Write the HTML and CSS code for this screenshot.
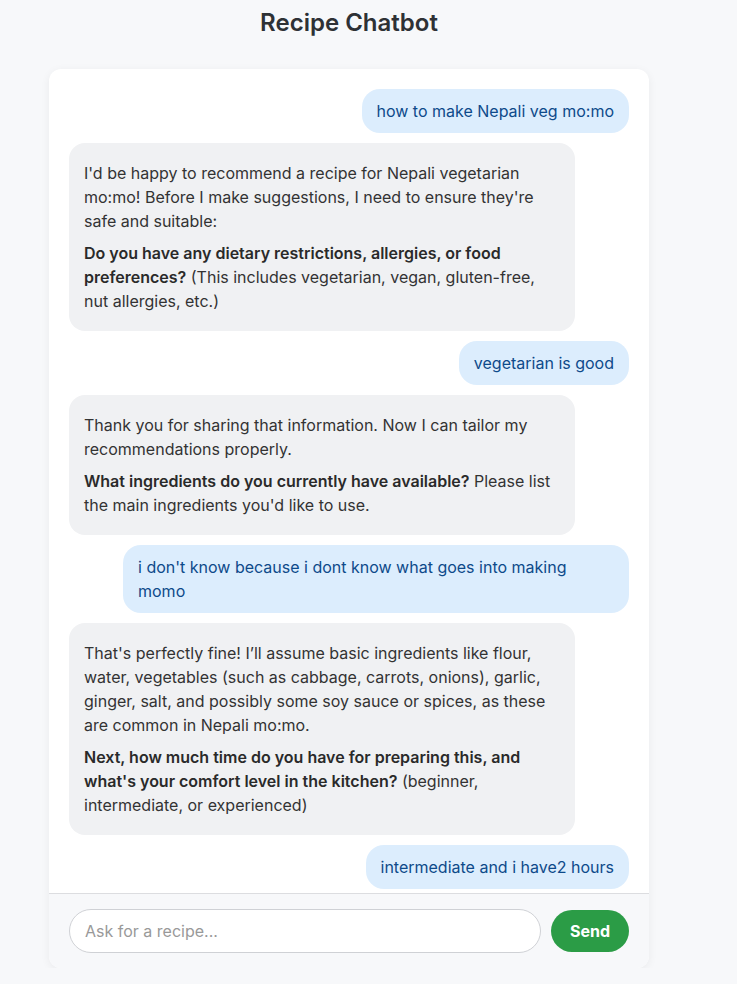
FILE: index.html
```html
<!DOCTYPE html>
<html lang="en">
<head>
<meta charset="utf-8">
<title>Recipe Chatbot</title>
<link rel="stylesheet" href="styles.css">
</head>
<body>
<div class="page">
  <h1 class="title">Recipe Chatbot</h1>
  <div class="chat">
    <div class="messages">
      <div class="msg user">how to make Nepali veg mo:mo</div>
      <div class="msg bot">
        <p>I'd be happy to recommend a recipe for Nepali vegetarian mo:mo! Before I make suggestions, I need to ensure they're safe and suitable:</p>
        <p><strong>Do you have any dietary restrictions, allergies, or food preferences?</strong> (This includes vegetarian, vegan, gluten-free, nut allergies, etc.)</p>
      </div>
      <div class="msg user">vegetarian is good</div>
      <div class="msg bot">
        <p>Thank you for sharing that information. Now I can tailor my recommendations properly.</p>
        <p><strong>What ingredients do you currently have available?</strong> Please list the main ingredients you'd like to use.</p>
      </div>
      <div class="msg user">i don't know because i dont know what goes into making momo</div>
      <div class="msg bot">
        <p>That's perfectly fine! I’ll assume basic ingredients like flour, water, vegetables (such as cabbage, carrots, onions), garlic, ginger, salt, and possibly some soy sauce or spices, as these are common in Nepali mo:mo.</p>
        <p><strong>Next, how much time do you have for preparing this, and what's your comfort level in the kitchen?</strong> (beginner, intermediate, or experienced)</p>
      </div>
      <div class="msg user">intermediate and i have2 hours</div>
    </div>
    <form class="composer">
      <input class="input" type="text" placeholder="Ask for a recipe...">
      <button class="send" type="button">Send</button>
    </form>
  </div>
</div>
</body>
</html>
```

FILE: styles.css
```css
* { box-sizing: border-box; }
html, body {
  margin: 0;
  padding: 0;
  background: #f7f8fa;
  font-family: Inter, "Liberation Sans", sans-serif;
  color: #333;
}
.page {
  width: 600px;
  margin-left: 49px;
  padding-top: 8px;
}
.title {
  margin: 0 0 32px;
  font-size: 24px;
  line-height: 29px;
  font-weight: 600;
  text-align: center;
  color: #2e3135;
}
.chat {
  background: #fff;
  border-radius: 12px;
  box-shadow: 0 2px 10px rgba(0,0,0,0.06);
  overflow: hidden;
}
.messages {
  height: 824px;
  overflow: hidden;
  padding: 20px 20px;
  display: flex;
  flex-direction: column;
  gap: 10px;
}
.msg {
  max-width: 506px;
  font-size: 16px;
  line-height: 24px;
  flex-shrink: 0;
}
.user {
  align-self: flex-end;
  background: #dcedfd;
  color: #0e4a8a;
  padding: 10px 15px;
  border-radius: 18px;
}
.bot {
  align-self: flex-start;
  background: #f0f1f3;
  color: #333;
  padding: 10px 15px;
  border-radius: 16px;
}
.bot p { margin: 8px 0; }
.bot strong { font-weight: 600; color: #2a2a2a; }
.composer {
  margin: 0;
  display: flex;
  align-items: center;
  gap: 10px;
  padding: 15px 20px 15px;
  background: #f7f8fa;
  border-top: 1px solid #dcdde0;
}
.input {
  flex: 1;
  height: 44px;
  border: 1px solid #cfd1d5;
  border-radius: 22px;
  padding: 0 15px;
  font-family: Inter, "Liberation Sans", sans-serif;
  font-size: 16px;
  background: #fff;
  color: #333;
  outline: none;
}
.input::placeholder { color: #999; }
.send {
  width: 78px;
  height: 42px;
  border: none;
  border-radius: 21px;
  background: #2b9c46;
  color: #fff;
  font-family: Inter, "Liberation Sans", sans-serif;
  font-size: 16px;
  font-weight: 700;
  cursor: pointer;
}
```
